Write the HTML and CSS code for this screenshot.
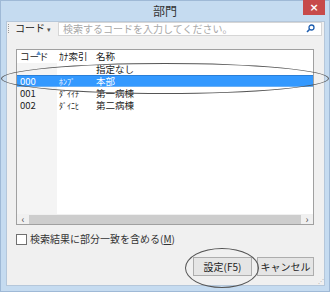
FILE: index.html
```html
<!DOCTYPE html>
<html lang="ja">
<head>
    <meta charset="UTF-8">
    <title>部門</title>
    <link rel="stylesheet" href="styles.css">
</head>
<body>
    <div class="window">
        <div class="titlebar">
            <span class="title">部門</span>
            <span class="close">×</span>
        </div>

        <div class="client">
            <div class="toolbar">
                <span class="grip"></span>
                <span class="field-select">コード <span class="caret">▾</span></span>
                <div class="search">
                    <span class="placeholder">検索するコードを入力してください。</span>
                    <svg class="magnifier" width="9" height="9" viewBox="0 0 9 9">
                        <circle cx="5.5" cy="3.5" r="2.5" fill="none" stroke="#1f5fb0" stroke-width="1.3"/>
                        <line x1="3.7" y1="5.3" x2="1" y2="8" stroke="#1f5fb0" stroke-width="1.6"/>
                    </svg>
                </div>
            </div>

            <div class="grid">
                <div class="grid-body">
                    <div class="row head">
                        <span class="c-code">コード<span class="sort">▲</span></span>
                        <span class="c-kana">ｶﾅ索引</span>
                        <span class="c-name">名称</span>
                    </div>
                    <div class="row">
                        <span class="c-code"></span>
                        <span class="c-kana"></span>
                        <span class="c-name">指定なし</span>
                    </div>
                    <div class="row selected">
                        <span class="c-code">000</span>
                        <span class="c-kana">ﾎﾝﾌﾞ</span>
                        <span class="c-name">本部</span>
                    </div>
                    <div class="row">
                        <span class="c-code">001</span>
                        <span class="c-kana">ﾀﾞｲｲﾁ</span>
                        <span class="c-name">第一病棟</span>
                    </div>
                    <div class="row">
                        <span class="c-code">002</span>
                        <span class="c-kana">ﾀﾞｲﾆﾋ</span>
                        <span class="c-name">第二病棟</span>
                    </div>
                    <div class="filler">
                        <span class="c-code"></span>
                    </div>
                </div>
                <div class="hscroll">
                    <span class="arrow">‹</span>
                    <span class="thumb"></span>
                    <span class="arrow">›</span>
                </div>
            </div>

            <label class="check">
                <span class="box"></span>
                検索結果に部分一致を含める(<u>M</u>)
            </label>

            <div class="buttons">
                <button class="btn">設定(F5)</button>
                <button class="btn">キャンセル</button>
            </div>
            <span class="sizegrip">⋰</span>
        </div>

        <div class="mark mark-row"></div>
        <div class="mark mark-btn"></div>
    </div>
</body>
</html>
```

FILE: styles.css
```css
body {
    margin: 0;
    font-family: "Noto Sans CJK JP", "Liberation Sans", sans-serif;
    font-size: 10px;
    line-height: 12px;
    color: #222;
}

.window {
    position: relative;
    width: 330px;
    height: 292px;
    background: #c5dbf0;
    box-sizing: border-box;
    border: 1px solid #9fb9d6;
    display: flex;
    flex-direction: column;
}

.titlebar {
    height: 20px;
    display: flex;
    justify-content: center;
    align-items: center;
    position: relative;
}

.title {
    font-size: 12px;
    line-height: 14px;
    color: #333;
}

.close {
    position: absolute;
    right: 4px;
    top: -1px;
    width: 22px;
    height: 15px;
    background: #c74a4a;
    color: #fff;
    font-family: "DejaVu Sans", sans-serif;
    font-size: 11px;
    font-weight: bold;
    display: flex;
    justify-content: center;
    align-items: center;
}

.client {
    flex: 1;
    margin: 0 4px 5px 5px;
    background: #f0f0f0;
    border: 1px solid #b5c7da;
    display: flex;
    flex-direction: column;
    position: relative;
}

.toolbar {
    height: 13px;
    display: flex;
    align-items: center;
    padding: 0 2px 0 1px;
}

.grip {
    width: 1px;
    height: 9px;
    border-left: 1px dotted #999;
    margin-right: 5px;
}

.field-select {
    width: 43px;
}

.caret {
    font-size: 7px;
    color: #555;
}

.search {
    flex: 1;
    height: 12px;
    background: #fff;
    border: 1px solid #d6d6d6;
    display: flex;
    align-items: center;
    justify-content: space-between;
    padding: 0 6px 0 4px;
}

.placeholder {
    color: #a8a8a8;
}

.grid {
    margin: 14px 10px 0 9px;
    height: 174px;
    border: 1px solid #a0a0a0;
    background: #fff;
    display: flex;
    flex-direction: column;
}

.grid-body {
    flex: 1;
    display: flex;
    flex-direction: column;
    overflow: hidden;
}

.row {
    height: 12px;
    display: flex;
    align-items: center;
    flex-shrink: 0;
    font-size: 9.5px;
    line-height: 11px;
}

.row.head {
    height: 13px;
}

.c-code {
    width: 37px;
    padding-left: 3px;
    align-self: stretch;
    display: flex;
    align-items: center;
    background: #f4f4f4;
    position: relative;
}

.c-kana {
    width: 37px;
    padding-left: 2px;
    font-size: 8px;
}

.head .c-code,
.head .c-kana,
.head .c-name {
    background: #fff;
    font-size: 9.5px;
}

.sort {
    position: absolute;
    left: 19px;
    top: 0;
    font-size: 5px;
    line-height: 5px;
    color: #5a8fc8;
}

.row.selected {
    background: #3399ff;
    color: #fff;
    border-top: 1px solid #2a7fd8;
    border-bottom: 1px solid #6ab0f5;
    height: 10px;
}

.row.selected .c-code {
    background: transparent;
}

.filler {
    flex: 1;
    display: flex;
}

.hscroll {
    height: 10px;
    display: flex;
    align-items: center;
    background: #f0f0f0;
}

.arrow {
    width: 12px;
    text-align: center;
    color: #555;
    line-height: 10px;
}

.thumb {
    flex: 1;
    height: 9px;
    background: #cdcdcd;
}

.check {
    display: flex;
    align-items: center;
    margin: 8px 0 0 9px;
    color: #333;
}

.box {
    width: 9px;
    height: 9px;
    border: 1px solid #707070;
    background: #fff;
    margin-right: 3px;
}

.buttons {
    display: flex;
    justify-content: flex-end;
    gap: 5px;
    margin: 12px 10px 0 0;
}

.btn {
    width: 59px;
    height: 19px;
    padding: 0;
    font-family: "Noto Sans CJK JP", sans-serif;
    font-size: 10px;
    color: #222;
    background: #e5e5e5;
    border: 1px solid #adadad;
}

.btn:last-child {
    width: 57px;
}

.sizegrip {
    position: absolute;
    right: 0;
    bottom: -2px;
    font-size: 6px;
    color: #aaa;
}

.mark {
    position: absolute;
    border: 1px solid #555;
    border-radius: 50%;
}

.mark-row {
    left: 0;
    top: 62px;
    width: 326px;
    height: 29px;
}

.mark-btn {
    left: 184px;
    top: 247px;
    width: 72px;
    height: 38px;
}
```
